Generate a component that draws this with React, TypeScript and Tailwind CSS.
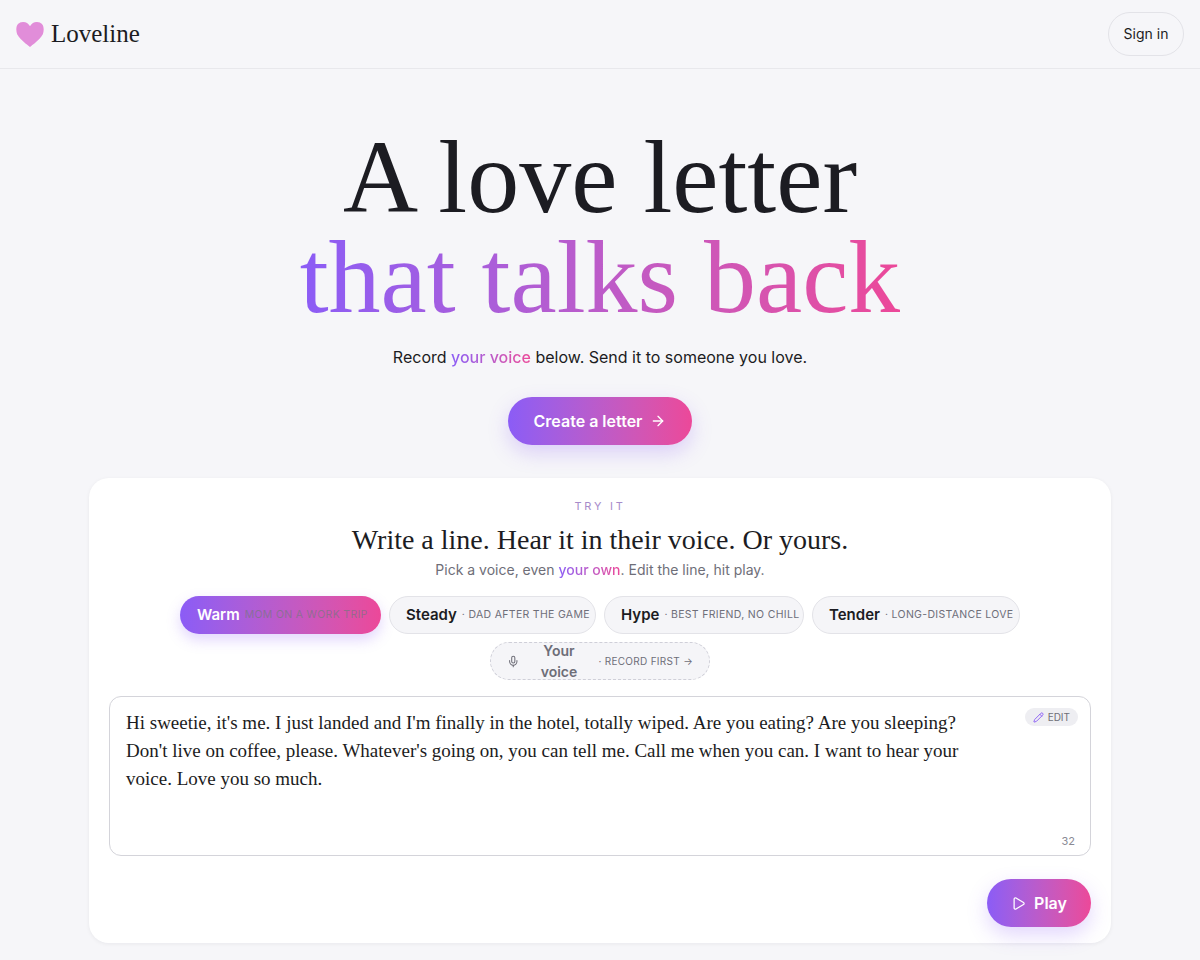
import { ArrowRight, Mic, Pencil, Play } from "lucide-react";

const bars = [2, 4, 6, 8, 10, 12, 14, 16, 18, 20, 22, 24, 26];
const heading = "font-['Liberation_Serif',serif]";

function Heart() {
  return (
    <svg width="28" height="28" viewBox="0 0 28 28" aria-hidden="true">
      <defs>
        <clipPath id="heart-shape">
          <path d="M14 27C8 22 0 16.5 0 9.5 0 5 3.2 2 7 2c3 0 5.4 1.6 7 4.2C15.6 3.6 18 2 21 2c3.8 0 7 3 7 7.5C28 16.5 20 22 14 27Z" />
        </clipPath>
      </defs>
      <g clipPath="url(#heart-shape)">
        <rect width="28" height="28" fill="#f0a8e4" />
        {bars.map((x) => (
          <rect key={x} x={x - 0.4} y="0" width="0.8" height="28" fill="#c04fc0" opacity="0.75" />
        ))}
      </g>
    </svg>
  );
}

type ChipProps = { name: string; note: string; width: string; active?: boolean };

function Chip({ name, note, width, active }: ChipProps) {
  return (
    <button
      className={
        active
          ? `${width} h-[38px] flex items-center gap-[5px] rounded-full px-[17px] bg-gradient-to-r from-[#8b5cf6] to-[#ec4899] shadow-[0_6px_14px_rgba(139,92,246,0.25)]`
          : `${width} h-[38px] flex items-center gap-[5px] rounded-full px-4 bg-[#f5f5f8] border border-[#e3e3e8]`
      }
    >
      <span className={active ? "text-[15px] font-semibold text-white" : "text-[15px] font-semibold text-[#1c1c22]"}>
        {name}
      </span>
      <span
        className={
          active
            ? "text-[10.5px] tracking-[0.03em] whitespace-nowrap text-[#76767f]/70"
            : "text-[10.5px] tracking-[0.03em] whitespace-nowrap text-[#6e6e78]"
        }
      >
        {active ? "" : "· "}
        {note}
      </span>
    </button>
  );
}

export default function App() {
  return (
    <div className="min-h-[960px] bg-[#f6f6f9] font-['Inter',sans-serif] text-[#1c1c22]">
      <header className="h-[69px] flex items-center justify-between pl-4 pr-4 border-b border-[#e8e8ec]">
        <div className="flex items-center gap-[7px]">
          <Heart />
          <span className={`${heading} text-[25px] text-[#1c1c22]`}>Loveline</span>
        </div>
        <button className="h-[44px] w-[76px] rounded-full border border-[#e3e3e8] text-sm text-[#1c1c22]">Sign in</button>
      </header>

      <main className="flex flex-col items-center">
        <h1 className={`${heading} mt-[58px] text-center text-[104px] leading-[100px] font-normal`}>
          <span className="block text-[#1c1c22]">A love letter</span>
          <span className="inline-block bg-gradient-to-r from-[#8b5cf6] to-[#ec4899] bg-clip-text text-transparent">
            that talks back
          </span>
        </h1>

        <p className="mt-[18px] text-[16px] leading-6 text-[#1c1c22]">
          Record{" "}
          <span className="font-medium bg-gradient-to-r from-[#8b5cf6] to-[#ec4899] bg-clip-text text-transparent">
            your voice
          </span>{" "}
          below. Send it to someone you love.
        </p>

        <button className="mt-[28px] h-12 w-[184px] flex items-center justify-center gap-2 rounded-full bg-gradient-to-r from-[#8b5cf6] to-[#ec4899] text-white text-[16px] font-semibold shadow-[0_8px_20px_rgba(139,92,246,0.25)]">
          Create a letter
          <ArrowRight size={16} />
        </button>

        <section className="mt-[33px] w-[1022px] h-[465px] rounded-[20px] bg-white px-5 pt-[21px] shadow-[0_1px_4px_rgba(20,20,40,0.06)]">
          <p className="text-center text-[11px] leading-[14px] tracking-[0.25em] text-[#a78bca]">TRY IT</p>
          <h2 className={`${heading} mt-[9px] text-center text-[28px] leading-[36px] font-normal text-[#1c1c22]`}>
            Write a line. Hear it in their voice. Or yours.
          </h2>
          <p className="mt-[2px] text-center text-sm leading-5 text-[#6e6e78]">
            Pick a voice, even{" "}
            <span className="font-medium bg-gradient-to-r from-[#8b5cf6] to-[#ec4899] bg-clip-text text-transparent">
              your own
            </span>
            . Edit the line, hit play.
          </p>

          <div className="mt-4 flex flex-wrap justify-center gap-2">
            <Chip active name="Warm" note="MOM ON A WORK TRIP" width="w-[201px]" />
            <Chip name="Steady" note="DAD AFTER THE GAME" width="w-[207px]" />
            <Chip name="Hype" note="BEST FRIEND, NO CHILL" width="w-[200px]" />
            <Chip name="Tender" note="LONG-DISTANCE LOVE" width="w-[208px]" />
            <button className="w-[220px] h-[38px] flex items-center gap-[5px] rounded-full px-4 bg-[#f5f5f8] border border-dashed border-[#cfcfd8]">
              <Mic size={13} className="text-[#6e6e78]" />
              <span className="text-[14px] font-semibold text-[#6e6e78]">Your voice</span>
              <span className="text-[10px] tracking-[0.03em] whitespace-nowrap text-[#6e6e78]">· RECORD FIRST →</span>
            </button>
          </div>

          <div className="relative mt-4 h-40 rounded-xl border border-[#d4d4da] bg-white px-4 py-3">
            <div className={`${heading} text-[19px] leading-7 text-[#1c1c22]`}>
              Hi sweetie, it's me. I just landed and I'm finally in the hotel, totally wiped. Are you eating? Are you sleeping?
              <br />
              Don't live on coffee, please. Whatever's going on, you can tell me. Call me when you can. I want to hear your
              <br />
              voice. Love you so much.
            </div>
            <span className="absolute top-[11px] right-3 h-[18px] flex items-center gap-1 rounded-full bg-[#eeeef2] px-2 text-[10px] text-[#6e6e78]">
              <Pencil size={11} className="text-[#8b5cf6]" />
              EDIT
            </span>
            <span className="absolute bottom-[6px] right-[15px] text-[11px] text-[#8a8a94]">32</span>
          </div>

          <div className="mt-[23px] flex justify-end">
            <button className="h-12 w-[104px] flex items-center justify-center gap-2 rounded-full bg-gradient-to-r from-[#8b5cf6] to-[#ec4899] text-white text-[16px] font-semibold shadow-[0_8px_20px_rgba(139,92,246,0.25)]">
              <Play size={15} />
              Play
            </button>
          </div>
        </section>
      </main>
    </div>
  );
}
